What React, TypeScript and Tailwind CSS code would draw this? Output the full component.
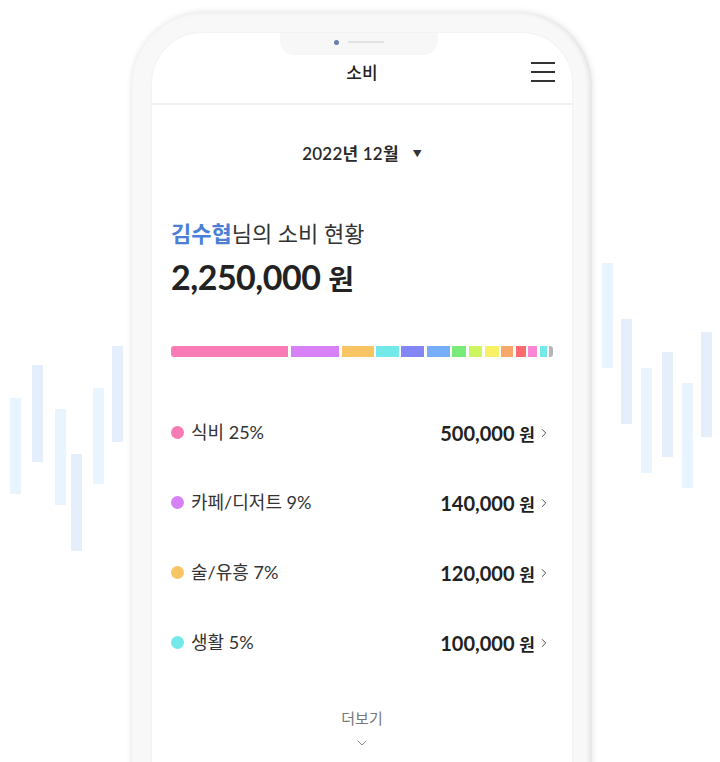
import { ChevronRight, ChevronDown } from "lucide-react"

const segments = [
  { w: "w-[118px]", c: "bg-[#f97bb5]", r: "rounded-l-[3px]" },
  { w: "w-[49px]", c: "bg-[#d681f5]", r: "" },
  { w: "w-[32px]", c: "bg-[#f8c565]", r: "" },
  { w: "w-[23px]", c: "bg-[#74e9ea]", r: "" },
  { w: "w-[23px]", c: "bg-[#8386f6]", r: "" },
  { w: "w-[23px]", c: "bg-[#77adf6]", r: "" },
  { w: "w-[14px]", c: "bg-[#7aeb7a]", r: "" },
  { w: "w-[14px]", c: "bg-[#ccf55f]", r: "" },
  { w: "w-[14px]", c: "bg-[#f8f165]", r: "" },
  { w: "w-[12px]", c: "bg-[#f8a86b]", r: "" },
  { w: "w-[10px]", c: "bg-[#fd6a70]", r: "" },
  { w: "w-[9px]", c: "bg-[#fc86d6]", r: "" },
  { w: "w-[7px]", c: "bg-[#74e9ea]", r: "" },
  { w: "w-[4px]", c: "bg-[#b5b5b5]", r: "rounded-r-[3px]" },
]

const categories = [
  { name: "식비", pct: "25%", amount: "500,000", dot: "bg-[#f97bb5]" },
  { name: "카페/디저트", pct: "9%", amount: "140,000", dot: "bg-[#d681f5]" },
  { name: "술/유흥", pct: "7%", amount: "120,000", dot: "bg-[#f8c565]" },
  { name: "생활", pct: "5%", amount: "100,000", dot: "bg-[#74e9ea]" },
]

const leftBars = [
  { x: 10, y: 398, h: 96, c: "#e8f4fe" },
  { x: 32, y: 365, h: 97, c: "#e4effb" },
  { x: 55, y: 409, h: 96, c: "#e8f4fe" },
  { x: 71, y: 454, h: 97, c: "#e4effb" },
  { x: 93, y: 388, h: 96, c: "#e8f4fe" },
  { x: 112, y: 346, h: 96, c: "#e4effb" },
]

const rightBars = [
  { x: 602, y: 263, h: 105, c: "#e8f4fe" },
  { x: 621, y: 319, h: 105, c: "#e4effb" },
  { x: 641, y: 368, h: 105, c: "#e8f4fe" },
  { x: 662, y: 352, h: 105, c: "#e4effb" },
  { x: 682, y: 383, h: 105, c: "#e8f4fe" },
  { x: 701, y: 332, h: 105, c: "#e4effb" },
]

export default function App() {
  return (
    <div className="relative w-[720px] h-[762px] overflow-hidden bg-white font-['Lato','Noto_Sans_CJK_KR',sans-serif] text-[#222]">
      {/* background wave bars */}
      <svg className="absolute left-0 top-0" width="720" height="762">
        {[...leftBars, ...rightBars].map((b, i) => (
          <rect key={i} x={b.x} y={b.y} width="11" height={b.h} fill={b.c} />
        ))}
      </svg>

      {/* phone */}
      <div className="relative ml-[132px] mt-[12px] w-[460px] h-[800px] rounded-t-[74px] bg-[#f8f8f8] shadow-[0_0_6px_rgba(0,0,0,0.12),inset_-3px_0_4px_rgba(0,0,0,0.08)] px-[20px] pt-[21px]">
        <div className="relative h-full rounded-t-[50px] bg-white shadow-[0_0_3px_rgba(0,0,0,0.06)] overflow-hidden">
          {/* notch */}
          <div className="absolute left-[128px] top-0 w-[158px] h-[22px] rounded-b-[14px] bg-[#f7f7f7] flex items-center justify-center gap-[9px] pb-[4px]">
            <div className="w-[5px] h-[5px] rounded-full bg-[#6a7fae]" />
            <div className="w-[36px] h-[2px] rounded-full bg-[#e2e2e2]" />
          </div>

          {/* header */}
          <div className="relative h-[72px] flex items-end justify-center pb-[18px] border-b-2 border-[#f0f0f0]">
            <span className="text-[17px] font-medium text-[#222]">소비</span>
            <div className="absolute right-[17px] top-[29px] flex flex-col gap-[7px]">
              <div className="w-[24px] h-[2px] bg-[#333]" />
              <div className="w-[24px] h-[2px] bg-[#333]" />
              <div className="w-[24px] h-[2px] bg-[#333]" />
            </div>
          </div>

          {/* month */}
          <div className="flex items-center justify-center gap-[14px] mt-[36px]">
            <span className="text-[17px] font-semibold tracking-[0.2px] text-[#2a2a2a]">2022년 12월</span>
            <span className="text-[9px] text-[#333]">▼</span>
          </div>

          <div className="px-[19px]">
            <p className="mt-[50px] text-[22px] text-[#333]">
              <span className="font-semibold text-[#4b7fd6]">김수협</span>님의 소비 현황
            </p>
            <p className="mt-[5px] text-[34px] font-bold tracking-[-0.5px] text-[#222] leading-[44px]">
              2,250,000 <span className="text-[28px] font-semibold">원</span>
            </p>

            {/* bar */}
            <div className="mt-[45px] flex gap-[2.5px] h-[11px]">
              {segments.map((s, i) => (
                <div key={i} className={`${s.w} ${s.c} ${s.r} h-full`} />
              ))}
            </div>

            {/* list */}
            <div className="mt-[63px] flex flex-col gap-[44px]">
              {categories.map((c) => (
                <div key={c.name} className="flex items-center justify-between h-[26px]">
                  <div className="flex items-center gap-[7px]">
                    <div className={`w-[13px] h-[13px] rounded-full ${c.dot}`} />
                    <span className="text-[18px] text-[#333]">
                      {c.name} {c.pct}
                    </span>
                  </div>
                  <div className="flex items-center gap-[2px] mr-[2px]">
                    <span className="text-[20px] font-bold text-[#222]">
                      {c.amount} <span className="text-[17px] font-semibold">원</span>
                    </span>
                    <ChevronRight size={14} strokeWidth={1.5} className="text-[#333]" />
                  </div>
                </div>
              ))}
            </div>

            <div className="mt-[51px] flex flex-col items-center">
              <span className="text-[15px] text-[#777]">더보기</span>
              <ChevronDown size={16} strokeWidth={1.3} className="text-[#777] mt-[6px]" />
            </div>
          </div>
        </div>
      </div>
    </div>
  )
}
